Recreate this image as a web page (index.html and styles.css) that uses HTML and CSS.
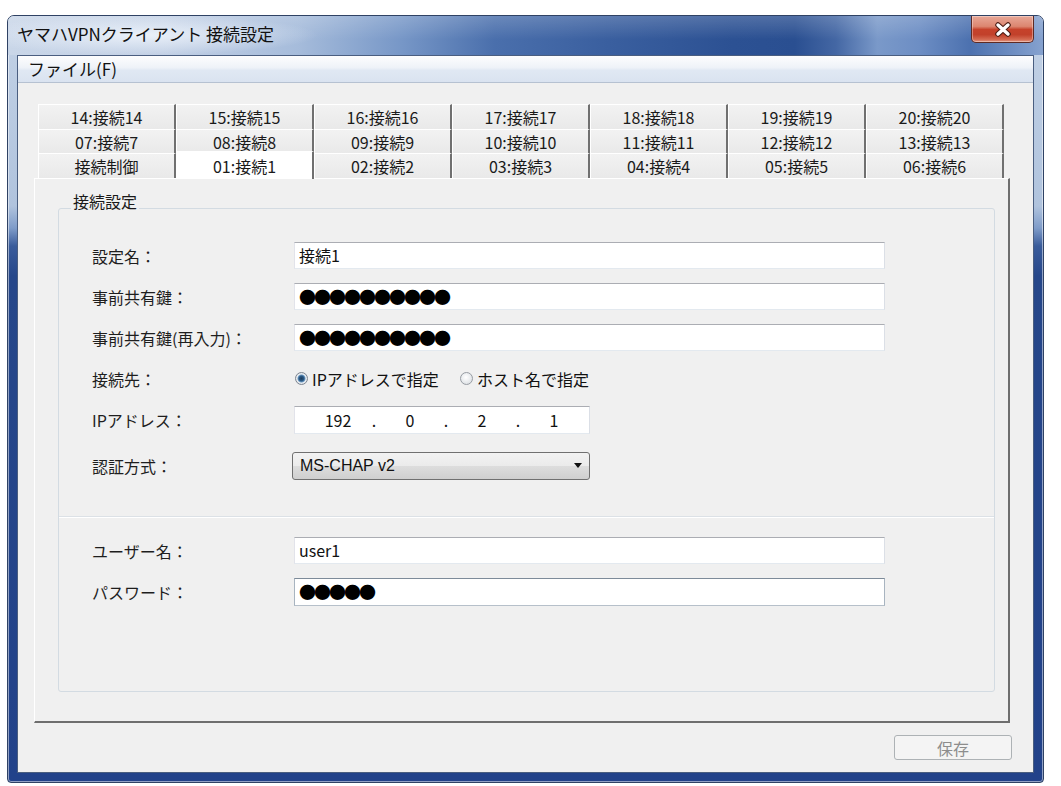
FILE: index.html
```html
<!DOCTYPE html>
<html lang="ja">
<head>
<meta charset="utf-8">
<title>ヤマハVPNクライアント 接続設定</title>
<link rel="stylesheet" href="styles.css">
</head>
<body>
<div class="window">
  <div class="titlebar">
    <span class="title">ヤマハVPNクライアント 接続設定</span>
    <button class="close" aria-label="閉じる">
      <svg width="20" height="15" viewBox="0 0 20 15">
        <path d="M5 3 L15 12 M15 3 L5 12" stroke="#4a1c14" stroke-width="5.5" stroke-linecap="round"/>
        <path d="M5 3 L15 12 M15 3 L5 12" stroke="#ffffff" stroke-width="3.4" stroke-linecap="round"/>
      </svg>
    </button>
  </div>
  <div class="client">
    <div class="menubar"><span class="menu-item">ファイル(F)</span></div>
    <div class="content">
      <div class="tabs">
        <div class="tab">14:接続14</div>
        <div class="tab">15:接続15</div>
        <div class="tab">16:接続16</div>
        <div class="tab">17:接続17</div>
        <div class="tab">18:接続18</div>
        <div class="tab">19:接続19</div>
        <div class="tab">20:接続20</div>
        <div class="tab">07:接続7</div>
        <div class="tab">08:接続8</div>
        <div class="tab">09:接続9</div>
        <div class="tab">10:接続10</div>
        <div class="tab">11:接続11</div>
        <div class="tab">12:接続12</div>
        <div class="tab">13:接続13</div>
        <div class="tab">接続制御</div>
        <div class="tab active">01:接続1</div>
        <div class="tab">02:接続2</div>
        <div class="tab">03:接続3</div>
        <div class="tab">04:接続4</div>
        <div class="tab">05:接続5</div>
        <div class="tab">06:接続6</div>
      </div>
      <div class="panel">
        <fieldset class="group">
          <legend>接続設定</legend>
          <div class="section top">
            <div class="row"><span class="label">設定名：</span><div class="field">接続1</div></div>
            <div class="row"><span class="label">事前共有鍵：</span><div class="field secret">●●●●●●●●●●</div></div>
            <div class="row"><span class="label">事前共有鍵(再入力)：</span><div class="field secret">●●●●●●●●●●</div></div>
            <div class="row">
              <span class="label">接続先：</span>
              <div class="radios">
                <span class="radio"><span class="rb on"></span>IPアドレスで指定</span>
                <span class="radio"><span class="rb"></span>ホスト名で指定</span>
              </div>
            </div>
            <div class="row">
              <span class="label">IPアドレス：</span>
              <div class="ip"><span class="oct">192</span><span class="sep">.</span><span class="oct">0</span><span class="sep">.</span><span class="oct">2</span><span class="sep">.</span><span class="oct">1</span></div>
            </div>
            <div class="row auth">
              <span class="label">認証方式：</span>
              <div class="select"><span>MS-CHAP v2</span><span class="arrow"></span></div>
            </div>
          </div>
          <div class="section bottom">
            <div class="row"><span class="label">ユーザー名：</span><div class="field">user1</div></div>
            <div class="row"><span class="label">パスワード：</span><div class="field secret focus">●●●●●</div></div>
          </div>
        </fieldset>
      </div>
      <div class="footer"><button class="save" disabled>保存</button></div>
    </div>
  </div>
</div>
</body>
</html>
```

FILE: styles.css
```css
* { box-sizing: border-box; }
html, body { margin: 0; padding: 0; }
body {
  background: #ffffff;
  font-family: "Noto Sans CJK JP", "Noto Sans", sans-serif;
  color: #1a1a1a;
  width: 1061px;
  height: 786px;
  overflow: hidden;
}

.window {
  margin: 15px 0 0 7px;
  width: 1037px;
  height: 768px;
  border: 1px solid #2f4264;
  border-radius: 7px 7px 4px 4px;
  background: linear-gradient(to bottom, #c3d2e6 0px, #b0c3dd 190px, #7f9cc9 212px, #3a5c9b 230px, #26478a 260px, #22428a 100%);
  box-shadow: inset 0 0 0 1px rgba(255, 255, 255, 0.5);
  display: flex;
  flex-direction: column;
}

.titlebar {
  height: 39px;
  flex: none;
  display: flex;
  justify-content: space-between;
  align-items: flex-start;
  padding-left: 9px;
  border-radius: 6px 6px 0 0;
  background:
    radial-gradient(ellipse 175px 20px at 135px 19px, rgba(236, 242, 250, 0.95), rgba(236, 242, 250, 0) 100%),
    linear-gradient(to bottom, rgba(255, 255, 255, 0.18), rgba(255, 255, 255, 0) 60%),
    linear-gradient(to right, #c9d6e8 0%, #c2d0e5 15%, #a6bcdb 28%, #7797c7 38%, #4a6fac 47%, #3a5f9f 58%, #2c5193 70%, #2a4f91 76%, #4467a4 80%, #7a99c9 84%, #6d8ec4 88%, #4c71af 93%, #86a2cf 100%);
}

.title {
  font-size: 17px;
  line-height: 36px;
  color: #111;
  white-space: nowrap;
}

.close {
  margin-right: 9px;
  width: 63px;
  height: 27px;
  padding: 0;
  border: 1px solid #5e2a23;
  border-top: none;
  border-radius: 0 0 5px 5px;
  background: linear-gradient(to bottom, #e8a898 0%, #dc8670 40%, #c6422b 52%, #c2412b 72%, #d46a52 90%, #e39883 100%);
  box-shadow: inset 0 0 0 1px rgba(255, 255, 255, 0.35);
  display: flex;
  align-items: center;
  justify-content: center;
}

.client {
  flex: 1;
  margin: 0 9px 9px 9px;
  border: 1px solid #4a5e80;
  background: #f0f0f0;
  display: flex;
  flex-direction: column;
  min-height: 0;
}

.menubar {
  height: 27px;
  flex: none;
  border-bottom: 1px solid #b6c1d1;
  background: linear-gradient(to bottom, #fdfdfe 0%, #eef2f8 45%, #e0e8f3 55%, #dae3f0 100%);
  padding-left: 10px;
  font-size: 17px;
  line-height: 26px;
  color: #111;
}

.content {
  flex: 1;
  padding: 21px 0 0 16px;
  display: flex;
  flex-direction: column;
}

.tabs {
  margin-left: 4px;
  display: grid;
  grid-template-columns: repeat(7, 138px);
  grid-template-rows: 25px 24px 25px;
  position: relative;
  z-index: 1;
}

.tab {
  font-size: 16px;
  line-height: 1;
  display: flex;
  align-items: center;
  justify-content: center;
  border-top: 1px solid #ffffff;
  border-left: 1px solid #ffffff;
  border-right: 2px solid #707070;
  background: linear-gradient(#f2f2f2, #e9e9e9);
  color: #1a1a1a;
  white-space: nowrap;
}

.tab.active {
  background: #ffffff;
  margin-top: -2px;
  margin-bottom: -1px;
}

.panel {
  width: 976px;
  height: 545px;
  flex: none;
  border-top: 1px solid #ffffff;
  border-left: 1px solid #ffffff;
  border-right: 2px solid #6e6e6e;
  border-bottom: 2px solid #6e6e6e;
  background: #f0f0f0;
  display: flex;
  flex-direction: column;
}

.group {
  flex: 1;
  margin: 14px 13px 29px 23px;
  padding: 0;
  border: 1px solid #d3dbe2;
  border-radius: 3px;
  min-width: 0;
  display: flex;
  flex-direction: column;
}

.group legend {
  margin-left: 12px;
  padding: 0 2px 15px;
  font-size: 16px;
  line-height: 16px;
  color: #1a1a1a;
}

.section { padding-left: 33px; }

.section.top {
  padding-top: 11px;
  padding-bottom: 30px;
  border-bottom: 1px solid #dce1e6;
  box-shadow: 0 1px 0 #ffffff;
}

.section.bottom { padding-top: 13px; }

.row {
  display: grid;
  grid-template-columns: 202px auto;
  justify-content: start;
  align-items: center;
  height: 41px;
}

.row.auth { margin-top: 5px; }

.label {
  font-size: 16px;
  color: #1e1e1e;
  white-space: nowrap;
}

.field {
  width: 591px;
  height: 27px;
  background: #ffffff;
  border: 1px solid;
  border-color: #abadb3 #dbdfe6 #e3e9ef #e2e3ea;
  font-size: 16px;
  line-height: 25px;
  padding-left: 4px;
  color: #111;
  white-space: nowrap;
  overflow: hidden;
}

.field.secret {
  font-size: 17px;
  letter-spacing: -2px;
  color: #000;
}

.field.focus {
  height: 28px;
  border-color: #7d8b99 #a8b4c0 #b6c0ca #a8b4c0;
}

.radios {
  margin-left: 1px;
  display: grid;
  grid-template-columns: 165px auto;
  align-items: center;
  font-size: 16px;
  color: #111;
}

.radio {
  display: flex;
  align-items: center;
  gap: 4px;
  white-space: nowrap;
}

.rb {
  width: 13px;
  height: 13px;
  border-radius: 50%;
  border: 1px solid #979ca3;
  background: radial-gradient(circle at 45% 40%, #ffffff 0, #eef0f2 40%, #d4d8dd 100%);
  flex: none;
}

.rb.on {
  border-color: #7d8590;
  background: radial-gradient(circle at 50% 50%, #1f3e5e 0, #2c5a86 2.5px, #6f9cc4 3.6px, #e9edf1 4.4px, #d2d7dd 100%);
}

.ip {
  width: 296px;
  height: 28px;
  background: #ffffff;
  border: 1px solid;
  border-color: #abadb3 #dbdfe6 #e3e9ef #e2e3ea;
  display: flex;
  align-items: center;
  padding-left: 13px;
  font-size: 16px;
  color: #111;
}

.oct { width: 60px; text-align: center; }
.sep { width: 12px; text-align: center; }

.select {
  width: 298px;
  height: 28px;
  margin-left: -2px;
  border: 1px solid #707070;
  border-radius: 3px;
  background: linear-gradient(#f2f2f2 0%, #ebebeb 50%, #dddddd 51%, #cfcfcf 100%);
  display: flex;
  align-items: center;
  justify-content: space-between;
  padding: 0 7px;
  font-family: "Liberation Sans", Arial, sans-serif;
  font-size: 16px;
  color: #111;
}

.arrow {
  width: 0;
  height: 0;
  border-left: 4px solid transparent;
  border-right: 4px solid transparent;
  border-top: 5px solid #111;
}

.footer {
  display: flex;
  justify-content: flex-end;
  padding: 12px 21px 0 0;
}

.save {
  width: 118px;
  height: 25px;
  border: 1px solid #adb2b5;
  border-radius: 3px;
  background: #f4f4f4;
  color: #8d8d8d;
  font-family: "Noto Sans CJK JP", sans-serif;
  font-size: 16px;
  line-height: 1;
  padding: 0;
}
```
